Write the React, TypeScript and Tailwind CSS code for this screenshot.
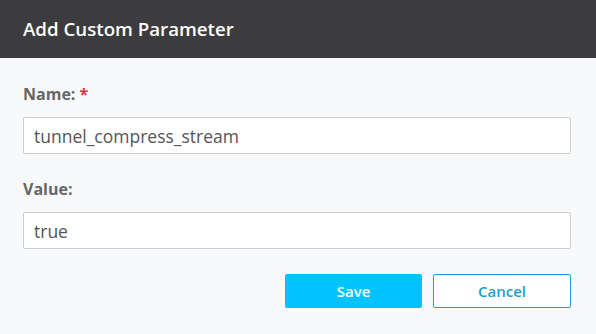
export default function App() {
  return (
    <div className="w-[596px] h-[334px] bg-[#f8f9fb] font-['Open_Sans',sans-serif]">
      <div className="h-[58px] bg-[#3c3c3e] flex items-center px-[23px]">
        <h1 className="text-[18.7px] font-semibold text-white">Add Custom Parameter</h1>
      </div>
      <div className="pl-[23px] pr-[25px] pt-[24px]">
        <label className="block text-[16px] font-bold text-[#666] leading-[24px]">
          Name: <span className="text-[#d9363e]">*</span>
        </label>
        <input
          defaultValue="tunnel_compress_stream"
          className="mt-[11px] w-full h-[37px] bg-white border border-[#ccc] rounded-[2px] px-[10px] text-[17.5px] text-[#555] outline-none"
        />
        <label className="block mt-[23px] text-[16px] font-bold text-[#666] leading-[24px]">
          Value:
        </label>
        <input
          defaultValue="true"
          className="mt-[11px] w-full h-[37px] bg-white border border-[#ccc] rounded-[2px] px-[10px] text-[17.5px] text-[#555] outline-none"
        />
        <div className="flex justify-end gap-[11px] mt-[25px]">
          <button className="w-[137px] h-[34px] rounded-[2px] bg-[#00c3ff] text-white text-[15px] font-semibold">
            Save
          </button>
          <button className="w-[138px] h-[34px] rounded-[2px] border border-[#1a9fd0] bg-white text-[#1a9fd0] text-[15px] font-semibold">
            Cancel
          </button>
        </div>
      </div>
    </div>
  );
}
